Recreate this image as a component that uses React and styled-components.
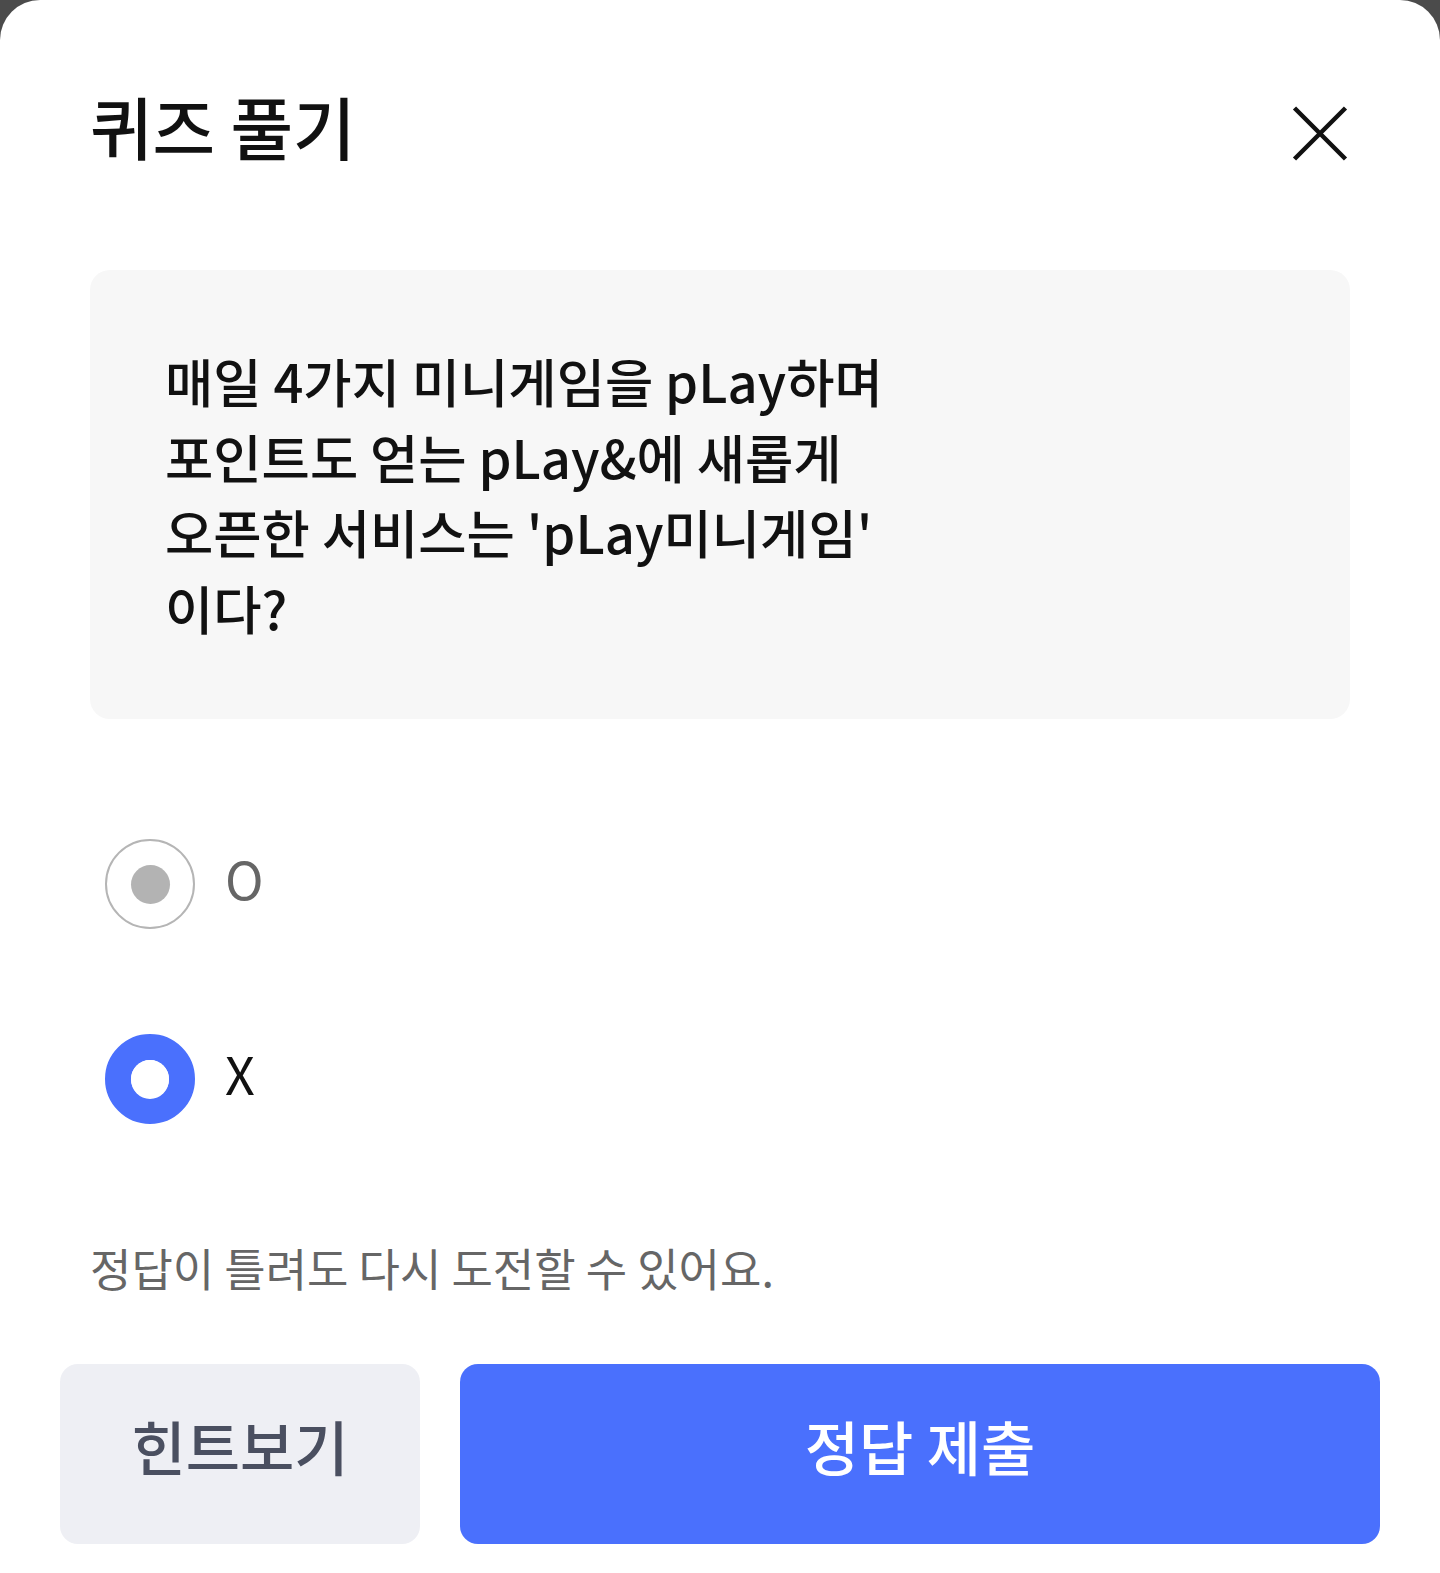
import React, { useState } from 'react';
import styled, { createGlobalStyle } from 'styled-components';

const GlobalStyle = createGlobalStyle`
  html, body {
    margin: 0;
    padding: 0;
    background: #4b4b4b;
  }
  body {
    font-family: "Noto Sans CJK KR", "Noto Sans", sans-serif;
    color: #111;
  }
  * { box-sizing: border-box; }
`;

const Sheet = styled.div`
  min-height: 1573px;
  background: #fff;
  border-radius: 40px 40px 0 0;
  padding: 0 90px 29px;
  display: flex;
  flex-direction: column;
`;

const Header = styled.header`
  display: flex;
  justify-content: space-between;
  align-items: flex-start;
  padding-top: 92px;
`;

const Title = styled.h1`
  margin: 0;
  font-size: 68px;
  line-height: 68px;
  font-weight: 500;
  color: #111;
`;

const CloseButton = styled.button`
  width: 60px;
  height: 60px;
  margin-top: 11px;
  padding: 0;
  border: none;
  background: none;
  cursor: pointer;
  svg { display: block; }
`;

const QuestionBox = styled.div`
  margin-top: 107px;
  padding: 73px 75px 74px;
  background: #f7f7f7;
  border-radius: 20px;
  font-size: 52.5px;
  line-height: 75.5px;
  font-weight: 500;
  color: #111;
`;

const Options = styled.div`
  margin-top: 120px;
  display: flex;
  flex-direction: column;
  gap: 105px;
  padding-left: 15px;
`;

const Option = styled.label`
  display: flex;
  align-items: center;
  gap: 30px;
  cursor: pointer;
`;

const Radio = styled.span`
  width: 90px;
  height: 90px;
  border-radius: 50%;
  flex-shrink: 0;
  display: flex;
  align-items: center;
  justify-content: center;
  border: ${p => (p.checked ? '26px solid #4a70fd' : '2px solid #b5b5b5')};
  background: #fff;
  &::after {
    content: '';
    width: 39px;
    height: 39px;
    border-radius: 50%;
    background: ${p => (p.checked ? '#fff' : '#b3b3b3')};
  }
`;

const OptionLabel = styled.span`
  font-size: 52px;
  line-height: 52px;
  margin-bottom: 12px;
  color: ${p => (p.muted ? '#666' : '#111')};
`;

const Notice = styled.p`
  margin: 114px 0 0;
  font-size: 45px;
  line-height: 60px;
  color: #666;
`;

const Actions = styled.div`
  margin: 66px -30px 0;
  display: flex;
  gap: 40px;
`;

const ActionButton = styled.button`
  height: 180px;
  padding: 0 0 17px;
  border: none;
  border-radius: 18px;
  font-family: inherit;
  font-size: 59px;
  font-weight: 500;
  cursor: pointer;
  flex: ${p => (p.primary ? '1' : '0 0 360px')};
  background: ${p => (p.primary ? '#4a70fd' : '#eeeff4')};
  color: ${p => (p.primary ? '#fff' : '#4a4f60')};
`;

function CloseIcon() {
  return (
    <svg width="60" height="60" viewBox="0 0 60 60" fill="none">
      <path d="M4.5 5 L55.5 56 M55.5 5 L4.5 56" stroke="#111" strokeWidth="4.5" />
    </svg>
  );
}

export default function App() {
  const [answer, setAnswer] = useState('X');

  return (
    <>
      <GlobalStyle />
      <Sheet>
        <Header>
          <Title>퀴즈 풀기</Title>
          <CloseButton aria-label="닫기">
            <CloseIcon />
          </CloseButton>
        </Header>

        <QuestionBox>
          매일 4가지 미니게임을 pLay하며<br />
          포인트도 얻는 pLay&amp;에 새롭게<br />
          오픈한 서비스는 'pLay미니게임'<br />
          이다?
        </QuestionBox>

        <Options>
          {['O', 'X'].map(v => (
            <Option key={v} onClick={() => setAnswer(v)}>
              <Radio checked={answer === v} />
              <OptionLabel muted={answer !== v}>{v}</OptionLabel>
            </Option>
          ))}
        </Options>

        <Notice>정답이 틀려도 다시 도전할 수 있어요.</Notice>

        <Actions>
          <ActionButton>힌트보기</ActionButton>
          <ActionButton primary>정답 제출</ActionButton>
        </Actions>
      </Sheet>
    </>
  );
}
